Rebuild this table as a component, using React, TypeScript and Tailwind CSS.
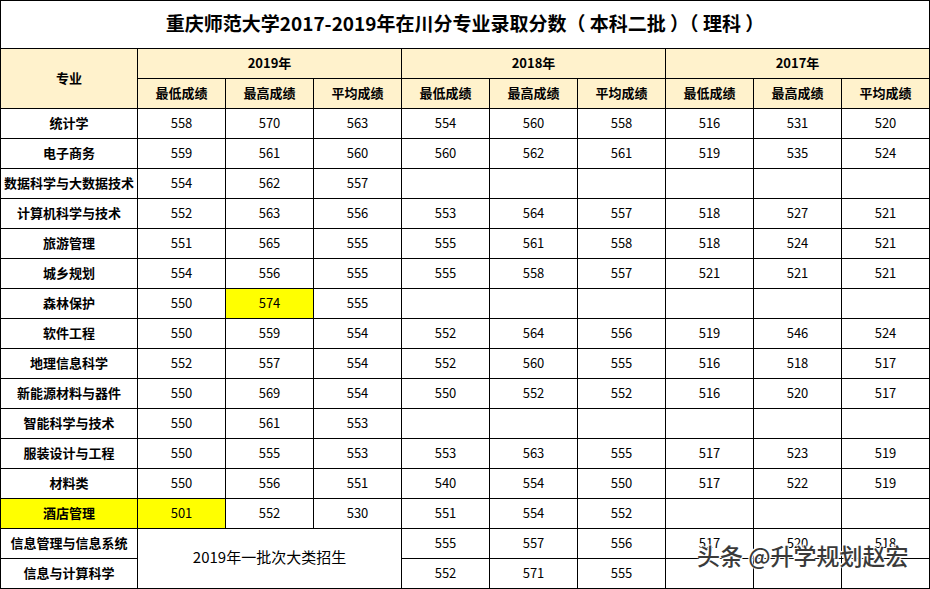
type Row = {
  name: string;
  scores: (string | null)[];
  hlName?: boolean;
  hl?: number[];
};

const rows: Row[] = [
  { name: "统计学", scores: ["558", "570", "563", "554", "560", "558", "516", "531", "520"] },
  { name: "电子商务", scores: ["559", "561", "560", "560", "562", "561", "519", "535", "524"] },
  { name: "数据科学与大数据技术", scores: ["554", "562", "557", null, null, null, null, null, null] },
  { name: "计算机科学与技术", scores: ["552", "563", "556", "553", "564", "557", "518", "527", "521"] },
  { name: "旅游管理", scores: ["551", "565", "555", "555", "561", "558", "518", "524", "521"] },
  { name: "城乡规划", scores: ["554", "556", "555", "555", "558", "557", "521", "521", "521"] },
  { name: "森林保护", scores: ["550", "574", "555", null, null, null, null, null, null], hl: [1] },
  { name: "软件工程", scores: ["550", "559", "554", "552", "564", "556", "519", "546", "524"] },
  { name: "地理信息科学", scores: ["552", "557", "554", "552", "560", "555", "516", "518", "517"] },
  { name: "新能源材料与器件", scores: ["550", "569", "554", "550", "552", "552", "516", "520", "517"] },
  { name: "智能科学与技术", scores: ["550", "561", "553", null, null, null, null, null, null] },
  { name: "服装设计与工程", scores: ["550", "555", "553", "553", "563", "555", "517", "523", "519"] },
  { name: "材料类", scores: ["550", "556", "551", "540", "554", "550", "517", "522", "519"] },
  { name: "酒店管理", scores: ["501", "552", "530", "551", "554", "552", null, null, null], hlName: true, hl: [0] },
];

// last two rows: 2019 merged across both rows
const tail = [
  { name: "信息管理与信息系统", scores: ["555", "557", "556", "517", "520", "518"] },
  { name: "信息与计算科学", scores: ["552", "571", "555", null, null, null] },
];

const years = ["2019年", "2018年", "2017年"];
const subs = ["最低成绩", "最高成绩", "平均成绩"];

const cell = "flex items-center justify-center pb-[2px] text-[13px] text-black";
const head = "flex items-center justify-center pb-[1px] bg-[#fff2cc] text-[13px] font-bold text-black";

export default function App() {
  return (
    <div className="relative w-[930px] h-[589px] bg-black p-px font-['Microsoft_YaHei','Noto_Sans_CJK_SC',sans-serif]">
      <div className="grid h-full gap-px grid-cols-[136px_repeat(9,87px)] grid-rows-[47px_repeat(18,29px)]">
        <div className="col-span-10 flex items-center justify-center bg-white pb-[2px] text-[19px] font-bold text-black">
          重庆师范大学2017-2019年在川分专业录取分数（ 本科二批 ）（ 理科 ）
        </div>

        <div className={`${head} row-span-2`}>专业</div>
        {years.map((y) => (
          <div key={y} className={`${head} col-span-3`}>
            {y}
          </div>
        ))}
        {years.map((y) =>
          subs.map((s) => (
            <div key={y + s} className={head}>
              {s}
            </div>
          ))
        )}

        {rows.map((r) => (
          <>
            <div
              key={r.name}
              className={`${cell} font-bold ${r.hlName ? "bg-[#ffff00]" : "bg-white"}`}
            >
              {r.name}
            </div>
            {r.scores.map((s, i) => (
              <div
                key={r.name + i}
                className={`${cell} ${r.hl?.includes(i) ? "bg-[#ffff00]" : "bg-white"}`}
              >
                {s}
              </div>
            ))}
          </>
        ))}

        <div className={`${cell} bg-white font-bold`}>{tail[0].name}</div>
        <div className={`${cell} bg-white col-span-3 row-span-2 text-[15px]`}>2019年一批次大类招生</div>
        {tail[0].scores.map((s, i) => (
          <div key={"t0" + i} className={`${cell} bg-white`}>
            {s}
          </div>
        ))}
        <div className={`${cell} bg-white font-bold`}>{tail[1].name}</div>
        {tail[1].scores.map((s, i) => (
          <div key={"t1" + i} className={`${cell} bg-white`}>
            {s}
          </div>
        ))}
      </div>

      {/* watermark */}
      <div className="absolute left-[697px] top-[544px] text-[23px] font-medium leading-none text-[#3a3a3a] [text-shadow:0_0_2px_#fff,0_0_2px_#fff,1px_1px_0_#fff,-1px_-1px_0_#fff]">
        头条 @升学规划赵宏
      </div>
    </div>
  );
}
